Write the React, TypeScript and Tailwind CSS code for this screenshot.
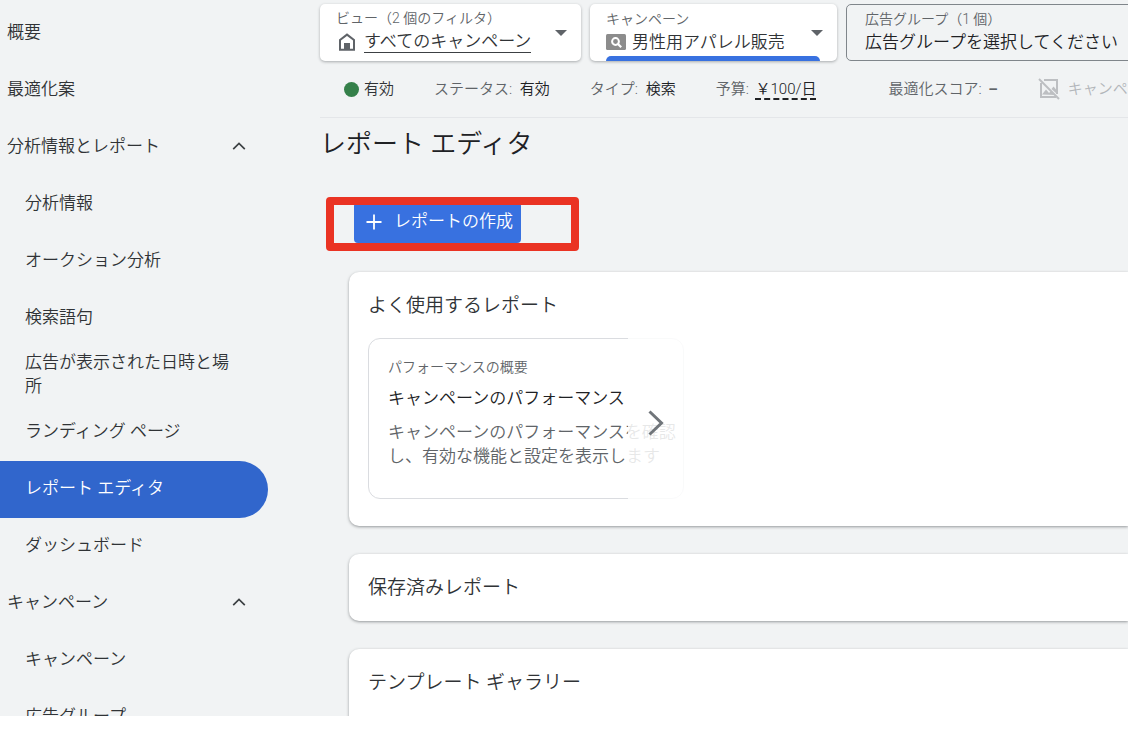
import React from 'react';

interface NavItem {
    label: string;
    child?: boolean;
    expandable?: boolean;
    active?: boolean;
}

const navItems: NavItem[] = [
    { label: '概要' },
    { label: '最適化案' },
    { label: '分析情報とレポート', expandable: true },
    { label: '分析情報', child: true },
    { label: 'オークション分析', child: true },
    { label: '検索語句', child: true },
    { label: '広告が表示された日時と場所', child: true },
    { label: 'ランディング ページ', child: true },
    { label: 'レポート エディタ', child: true, active: true },
    { label: 'ダッシュボード', child: true },
    { label: 'キャンペーン', expandable: true },
    { label: 'キャンペーン', child: true },
    { label: '広告グループ', child: true },
];

const ChevronUp = () => (
    <svg width="14" height="10" viewBox="0 0 14 10" fill="none" stroke="#3c4043" strokeWidth="1.7" className="shrink-0" aria-hidden="true">
        <path d="M1.2 8.2 7 2.4l5.8 5.8" />
    </svg>
);

const CaretDown = () => (
    <svg width="12" height="6" viewBox="0 0 12 6" fill="#5f6368" className="shrink-0" aria-hidden="true">
        <path d="M0 0h12L6 6z" />
    </svg>
);

const HomeIcon = () => (
    <svg width="18" height="18" viewBox="0 0 18 18" className="shrink-0" aria-hidden="true">
        <path d="M2 7 9 1.6 16 7v9.8H2z" fill="none" stroke="#5f6368" strokeWidth="2" />
        <path d="M6 10h6v7H6z" fill="#5f6368" />
    </svg>
);

const SearchCampaignIcon = () => (
    <svg width="20" height="16" viewBox="0 0 20 16" className="shrink-0" aria-hidden="true">
        <rect width="20" height="16" rx="1.5" fill="#8c8c8c" />
        <circle cx="9.5" cy="7.5" r="3.4" fill="none" stroke="#fff" strokeWidth="2" />
        <path d="m12 10 3.2 3.2" stroke="#fff" strokeWidth="2.2" />
    </svg>
);

const ImageOffIcon = () => (
    <svg width="22" height="22" viewBox="0 0 22 22" fill="none" stroke="#bdbfc2" strokeWidth="2" className="shrink-0" aria-hidden="true">
        <path d="M6 2h13v14" />
        <path d="M3 5v14h15" />
        <path d="m4 16.5 4-5 3 3.5 2-2 4 4z" fill="#bdbfc2" stroke="none" />
        <path d="m13.5 11 2-2.5 3 3.5v3.5z" fill="#bdbfc2" stroke="none" />
        <path d="m1 1 20 20" />
    </svg>
);

const Sidebar = () => (
    <nav className="w-[268px] shrink-0 pt-[5px]">
        {navItems.map((item, i) => (
            <a
                key={i}
                href="#"
                aria-current={item.active ? 'page' : undefined}
                className={`flex h-[57px] items-center justify-between pr-[22px] pb-[3px] text-[17px] leading-6 ${item.child ? 'pl-[25px]' : 'pl-[7px]'} ${item.active ? 'rounded-r-full bg-[#3166cc] text-white' : 'text-[#303336]'}`}
            >
                <span className="max-w-[210px]">{item.label}</span>
                {item.expandable && <ChevronUp />}
            </a>
        ))}
    </nav>
);

const ScopeBar = () => (
    <div className="flex gap-[9px]">
        <button className="flex h-[57px] w-[261px] shrink-0 items-center justify-between rounded-[5px] bg-white pr-[14px] pl-4 text-left shadow-[0_1px_3px_rgba(60,64,67,0.4)]">
            <span className="pb-1">
                <span className="block pb-[2px] text-sm leading-5 text-[#606468]">ビュー（2 個のフィルタ）</span>
                <span className="flex items-center gap-2 pl-[2px]">
                    <HomeIcon />
                    <span className="border-b border-[#3c4043] text-[17px] leading-[22px] text-[#303336]">すべてのキャンペーン</span>
                </span>
            </span>
            <CaretDown />
        </button>
        <button className="relative flex h-[57px] w-[247px] shrink-0 items-center justify-between overflow-hidden rounded-[5px] bg-white pr-[14px] pl-4 text-left shadow-[0_1px_3px_rgba(60,64,67,0.4)]">
            <span className="pb-1">
                <span className="block pb-[2px] text-sm leading-5 text-[#606468]">キャンペーン</span>
                <span className="flex items-center gap-[6px]">
                    <SearchCampaignIcon />
                    <span className="text-[17px] leading-[22px] text-[#303336]">男性用アパレル販売</span>
                </span>
            </span>
            <CaretDown />
            <span className="absolute right-[17px] bottom-0 left-4 h-[5px] rounded-t-[5px] bg-[#3871e0]" />
        </button>
        <button className="h-[57px] min-w-[320px] flex-1 rounded-[5px] border border-[#80868b] pb-1 pl-[18px] text-left">
            <span className="block pb-[2px] text-sm leading-5 text-[#606468]">広告グループ（1 個）</span>
            <span className="block text-[17px] leading-[22px] text-[#202124]">広告グループを選択してください</span>
        </button>
    </div>
);

const StatusBar = () => (
    <div className="flex h-[57px] items-center gap-10 border-b border-[#e4e6e9] pl-6 text-[15px] whitespace-nowrap text-[#606468]">
        <span className="flex items-center gap-[5px] text-[#303336]">
            <span className="size-[15px] rounded-full bg-[#35804a]" />
            有効
        </span>
        <span>ステータス: <span className="pl-1 text-[#202124]">有効</span></span>
        <span>タイプ: <span className="pl-1 text-[#202124]">検索</span></span>
        <span>予算: <a href="#" className="ml-[3px] border-b-2 border-dashed border-[#202124] text-[#202124]">￥100/日</a></span>
        <span className="pl-8">最適化スコア: <span className="pl-[3px] font-bold">–</span></span>
        <span className="flex items-center gap-2 text-[#b3b6ba]">
            <ImageOffIcon />
            キャンペーン
        </span>
    </div>
);

interface PanelProps {
    title: string;
    children?: React.ReactNode;
}

const Panel: React.FC<PanelProps> = ({ title, children }) => (
    <section className="rounded-l-[10px] bg-white px-[19px] pt-5 pb-[19px] shadow-[0_1px_3px_rgba(60,64,67,0.5)]">
        <h2 className="text-[19px] leading-7 text-[#303336]">{title}</h2>
        {children}
    </section>
);

export default function App() {
    return (
        <div className="h-screen bg-white pb-[18px] font-['Roboto','Noto_Sans_CJK_JP',sans-serif] font-[350]">
            <div className="flex h-full overflow-hidden bg-[#f1f3f4]">
                <Sidebar />
                <main className="min-w-0 flex-1 overflow-hidden pt-1">
                    <div className="pl-[52px]">
                        <ScopeBar />
                        <StatusBar />
                        <h1 className="pt-2 text-[26px] leading-9 text-[#202124]">レポート エディタ</h1>
                    </div>

                    <div className="flex pt-10 pl-[86px]">
                        <div className="relative">
                            <button className="flex h-[41px] items-center gap-3 rounded-[4px] bg-[#3871e0] pr-2 pb-[2px] pl-3 text-[17px] text-white">
                                <svg width="16" height="16" viewBox="0 0 16 16" stroke="currentColor" strokeWidth="1.8" aria-hidden="true">
                                    <path d="M8 0.5v15M0.5 8h15" />
                                </svg>
                                レポートの作成
                            </button>
                            {/* Highlight frame around the create button */}
                            <div className="pointer-events-none absolute -top-[5px] -left-7 h-[54px] w-[253px] rounded-[4px] border-8 border-[#ea3323]" />
                        </div>
                    </div>

                    <div className="flex flex-col gap-7 pt-[29px] pl-[81px]">
                        <Panel title="よく使用するレポート">
                            <div className="relative mt-[18px] mb-2 w-[316px]">
                                <a href="#" className="block h-[161px] rounded-xl border border-[#dadce0] px-[19px] pt-[18px]">
                                    <span className="block text-sm leading-5 text-[#606468]">パフォーマンスの概要</span>
                                    <span className="block pt-[9px] text-[17px] leading-6 text-[#202124]">キャンペーンのパフォーマンス</span>
                                    <span className="-mr-4 block pt-[10px] text-[17px] leading-6 text-[#606468]">
                                        キャンペーンのパフォーマンスを確認
                                        <br />
                                        し、有効な機能と設定を表示します
                                    </span>
                                </a>
                                <button aria-label="次へ" className="absolute inset-y-0 right-0 flex w-14 items-center bg-white/85 pt-2 pl-5">
                                    <svg width="16" height="26" viewBox="0 0 16 26" fill="none" stroke="#70757a" strokeWidth="3" aria-hidden="true">
                                        <path d="m1.5 1.5 12 11.5-12 11.5" />
                                    </svg>
                                </button>
                            </div>
                        </Panel>
                        <Panel title="保存済みレポート" />
                        <Panel title="テンプレート ギャラリー">
                            <div className="h-20" />
                        </Panel>
                    </div>
                </main>
            </div>
        </div>
    );
}
